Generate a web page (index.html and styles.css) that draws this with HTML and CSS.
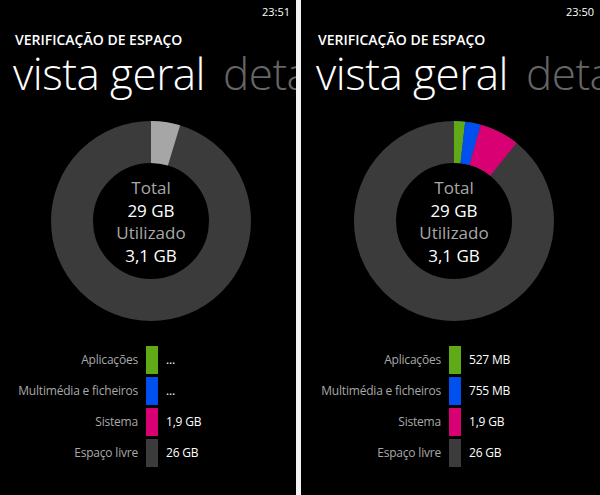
FILE: index.html
```html
<!DOCTYPE html>
<html lang="pt">
<head>
    <meta charset="UTF-8">
    <title>Verificação de espaço</title>
    <link rel="stylesheet" href="styles.css">
</head>
<body>
    <div class="screens">
        <div class="phone">
            <div class="status">23:51</div>
            <div class="app-title">VERIFICAÇÃO DE ESPAÇO</div>
            <div class="pivot"><span class="current">vista geral</span><span class="next">detalhes</span></div>
            <div class="chart">
                <svg width="200" height="200" viewBox="0 0 200 200">
                    <g transform="rotate(-90 100 100)" fill="none" stroke-width="42">
                        <circle cx="100" cy="100" r="79" stroke="#3b3b3b"></circle>
                        <circle cx="100" cy="100" r="79" stroke="#a6a6a6" pathLength="360" stroke-dasharray="17 343"></circle>
                    </g>
                </svg>
                <div class="chart-text">
                    <div class="muted">Total</div>
                    <div>29 GB</div>
                    <div class="muted">Utilizado</div>
                    <div>3,1 GB</div>
                </div>
            </div>
            <div class="legend">
                <span class="label">Aplicações</span><span class="swatch green"></span><span class="value">...</span>
                <span class="label">Multimédia e ficheiros</span><span class="swatch blue"></span><span class="value">...</span>
                <span class="label">Sistema</span><span class="swatch magenta"></span><span class="value">1,9 GB</span>
                <span class="label">Espaço livre</span><span class="swatch free"></span><span class="value">26 GB</span>
            </div>
        </div>
        <div class="divider"></div>
        <div class="phone phone-right">
            <div class="status">23:50</div>
            <div class="app-title">VERIFICAÇÃO DE ESPAÇO</div>
            <div class="pivot"><span class="current">vista geral</span><span class="next">detalhes</span></div>
            <div class="chart">
                <svg width="200" height="200" viewBox="0 0 200 200">
                    <g transform="rotate(-90 100 100)" fill="none" stroke-width="42">
                        <circle cx="100" cy="100" r="79" stroke="#3b3b3b"></circle>
                        <circle cx="100" cy="100" r="79" stroke="#60a917" pathLength="360" stroke-dasharray="6.5 353.5"></circle>
                        <circle cx="100" cy="100" r="79" stroke="#0050ef" pathLength="360" stroke-dasharray="0 6.5 9.1 344.4"></circle>
                        <circle cx="100" cy="100" r="79" stroke="#d80073" pathLength="360" stroke-dasharray="0 15.6 23.1 321.3"></circle>
                    </g>
                </svg>
                <div class="chart-text">
                    <div class="muted">Total</div>
                    <div>29 GB</div>
                    <div class="muted">Utilizado</div>
                    <div>3,1 GB</div>
                </div>
            </div>
            <div class="legend">
                <span class="label">Aplicações</span><span class="swatch green"></span><span class="value">527 MB</span>
                <span class="label">Multimédia e ficheiros</span><span class="swatch blue"></span><span class="value">755 MB</span>
                <span class="label">Sistema</span><span class="swatch magenta"></span><span class="value">1,9 GB</span>
                <span class="label">Espaço livre</span><span class="swatch free"></span><span class="value">26 GB</span>
            </div>
        </div>
    </div>
</body>
</html>
```

FILE: styles.css
```css
* {
    margin: 0;
    padding: 0;
}

body {
    background-color: #000;
    color: #fff;
    font-family: "Open Sans", "Noto Sans", sans-serif;
    overflow: hidden;
}

.screens {
    display: flex;
    width: 600px;
    height: 495px;
}

.phone {
    width: 297px;
    height: 495px;
    overflow: hidden;
    display: flex;
    flex-direction: column;
}

.phone-right {
    width: 298px;
    padding-left: 2px;
}

.divider {
    width: 5px;
    background-color: #f2f2f2;
}

.status {
    height: 24px;
    line-height: 24px;
    font-size: 11px;
    text-align: right;
    padding-right: 6px;
}

.app-title {
    padding-left: 15px;
    margin-top: 8px;
    font-size: 14px;
    font-weight: 600;
    line-height: 16px;
}

.pivot {
    padding-left: 13px;
    font-size: 44px;
    font-weight: 300;
    line-height: 50px;
    white-space: nowrap;
    letter-spacing: -0.5px;
}

.pivot .next {
    margin-left: 18px;
    color: #666;
}

.chart {
    position: relative;
    width: 200px;
    height: 200px;
    margin: 23px 0 0 51px;
}

.chart svg {
    display: block;
}

.chart-text {
    position: absolute;
    left: 0;
    top: 0;
    width: 200px;
    height: 200px;
    display: flex;
    flex-direction: column;
    justify-content: center;
    align-items: center;
    font-size: 17px;
    line-height: 22.5px;
    padding-top: 2px;
    box-sizing: border-box;
}

.muted {
    color: #a8a8a8;
}

.legend {
    display: grid;
    grid-template-columns: 138px 12px auto;
    column-gap: 8px;
    row-gap: 3px;
    margin-top: 25px;
    font-size: 12px;
    letter-spacing: -0.2px;
}

.legend .label {
    text-align: right;
    color: #a8a8a8;
    line-height: 28px;
    white-space: nowrap;
}

.legend .value {
    line-height: 28px;
}

.swatch {
    height: 28px;
}

.green {
    background-color: #60a917;
}

.blue {
    background-color: #0050ef;
}

.magenta {
    background-color: #d80073;
}

.free {
    background-color: #3b3b3b;
}
```
